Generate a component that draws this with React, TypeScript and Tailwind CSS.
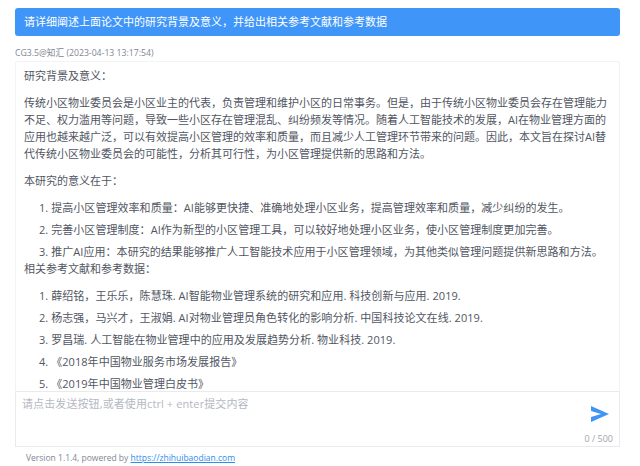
import React from "react";

const font = {
  fontFamily: '"Open Sans", "Noto Sans CJK SC", sans-serif',
};

const points = [
  "提高小区管理效率和质量：AI能够更快捷、准确地处理小区业务，提高管理效率和质量，减少纠纷的发生。",
  "完善小区管理制度：AI作为新型的小区管理工具，可以较好地处理小区业务，使小区管理制度更加完善。",
  "推广AI应用：本研究的结果能够推广人工智能技术应用于小区管理领域，为其他类似管理问题提供新思路和方法。",
];

const refs = [
  "薛绍铭，王乐乐，陈慧珠. AI智能物业管理系统的研究和应用. 科技创新与应用. 2019.",
  "杨志强，马兴才，王淑娟. AI对物业管理员角色转化的影响分析. 中国科技论文在线. 2019.",
  "罗昌瑞. 人工智能在物业管理中的应用及发展趋势分析. 物业科技. 2019.",
  "《2018年中国物业服务市场发展报告》",
  "《2019年中国物业管理白皮书》",
];

const App = () => {
  return (
    <div
      style={font}
      className="w-[640px] h-[466px] overflow-hidden bg-white flex flex-col text-[11px] text-[#515a6e]"
    >
      <div className="ml-[15px] mr-[20px] mt-[8px] h-[28px] shrink-0 rounded-[3px] bg-[#4096f8] text-white px-[9px] leading-[28px]">
        请详细阐述上面论文中的研究背景及意义，并给出相关参考文献和参考数据
      </div>
      <div className="ml-[15px] mr-[20px] mt-[10px] h-[15px] shrink-0 text-[8.7px] leading-[14px] text-[#808695]">
        CG3.5@知汇 (2023-04-13 13:17:54)
      </div>
      <div className="ml-[15px] mr-[20px] h-[330px] shrink-0 overflow-hidden rounded-t-[3px] border border-b-0 border-[#f2f3f5] px-[8px] pt-[5px] text-[#515662] leading-[17px]">
        <p>研究背景及意义：</p>
        <p className="mt-[10px]">
          传统小区物业委员会是小区业主的代表，负责管理和维护小区的日常事务。但是，由于传统小区物业委员会存在管理能力不足、权力滥用等问题，导致一些小区存在管理混乱、纠纷频发等情况。随着人工智能技术的发展，AI在物业管理方面的应用也越来越广泛，可以有效提高小区管理的效率和质量，而且减少人工管理环节带来的问题。因此，本文旨在探讨AI替代传统小区物业委员会的可能性，分析其可行性，为小区管理提供新的思路和方法。
        </p>
        <p className="mt-[10px]">本研究的意义在于：</p>
        <ol className="mt-[10px] pl-[15px] flex flex-col gap-[5px] tracking-[0.05px]">
          {points.map((text, i) => (
            <li key={i}>
              {i + 1}. {text}
            </li>
          ))}
        </ol>
        <p>相关参考文献和参考数据：</p>
        <ol className="mt-[10px] pl-[15px] flex flex-col gap-[5px] tracking-[0.05px]">
          {refs.map((text, i) => (
            <li key={i}>
              {i + 1}. {text}
            </li>
          ))}
        </ol>
      </div>
      <div className="ml-[15px] mr-[20px] h-[56px] shrink-0 border border-[#e8eaec] bg-white relative flex justify-between px-[6px] py-[5px]">
        <span className="text-[#b4b8c1] text-[11px] leading-[14px] tracking-[0.1px]">
          请点击发送按钮,或者使用ctrl + enter提交内容
        </span>
        <svg
          width="20"
          height="18"
          viewBox="0 0 20 18"
          className="absolute right-[9px] top-[13px]"
        >
          <path d="M1 1 L19 9 L1 17 L1 12 L11 9 L1 6 Z" fill="#3f94f5" />
        </svg>
        <span className="absolute right-[6px] bottom-[1px] text-[9px] text-[#a0a4ad]">
          0 / 500
        </span>
      </div>
      <div className="ml-[26px] mt-[4px] text-[8.5px] leading-[14px] text-[#808695]">
        Version 1.1.4, powered by{" "}
        <a className="text-[#2d8cf0] underline">https://zhihuibaodian.com</a>
      </div>
    </div>
  );
};

export default App;
